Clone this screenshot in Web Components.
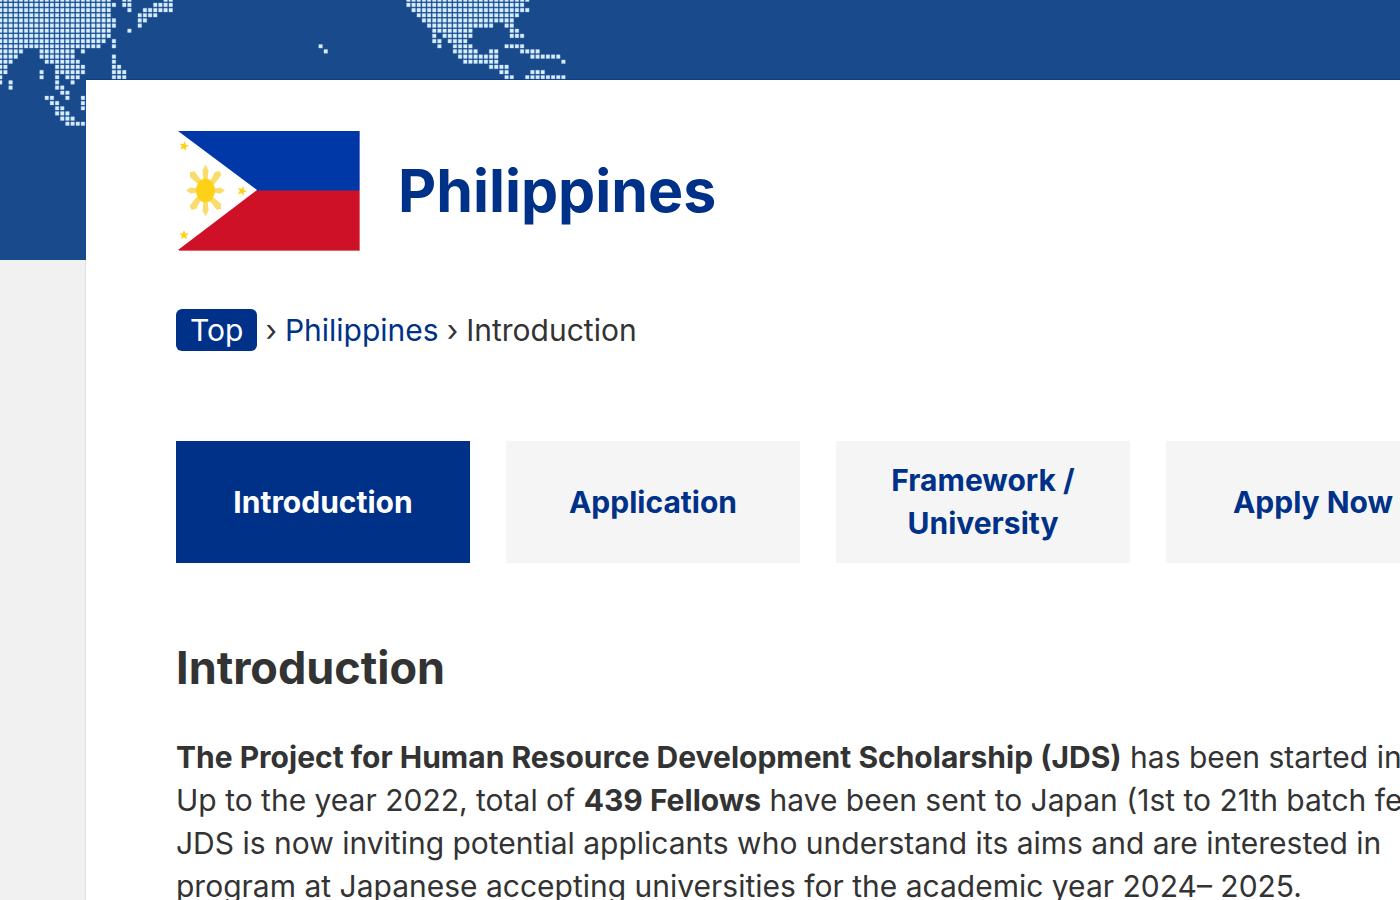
<!DOCTYPE html>
<html lang="en">
<head>
<meta charset="utf-8">
<meta name="viewport" content="width=device-width, initial-scale=1">
<title>Philippines – Introduction</title>
<style>
html{background:#f1f1f1}
body{margin:0;overflow-x:clip;font-family:Inter,"Noto Sans",sans-serif;font-size:30px;line-height:43px;color:#333;
--brand:#003188;--band:#194a8b;--tab:#f5f5f5}
</style>
</head>
<body>
<country-page>
  <dot-map slot="map"></dot-map>
  <country-heading>Philippines</country-heading>
  <bread-crumb></bread-crumb>
  <tab-bar>
    <tab-link href="#introduction" current>Introduction</tab-link>
    <tab-link href="#application">Application</tab-link>
    <tab-link href="#framework">Framework / University</tab-link>
    <tab-link href="#apply">Apply Now</tab-link>
  </tab-bar>
  <text-section heading="Introduction">
    <b>The Project for Human Resource Development Scholarship (JDS)</b> has been started in<br>
    Up to the year 2022, total of <b>439 Fellows</b> have been sent to Japan (1st to 21th batch fe<br>
    JDS is now inviting potential applicants who understand its aims and are interested in<br>
    program at Japanese accepting universities for the academic year 2024– 2025.
  </text-section>
</country-page>
<script>
const define = (name, html, setup) => customElements.define(name, class extends HTMLElement {
  connectedCallback() {
    if (this.shadowRoot) return;
    this.attachShadow({mode: 'open'}).innerHTML = html;
    if (setup) setup(this, this.shadowRoot);
  }
});

define('country-page', `<style>
:host{display:grid;grid-template-columns:86px minmax(0,1fr);grid-template-rows:80px 180px auto;overflow:hidden}
.band{grid-area:1/1/3/3;background:var(--band);overflow:hidden}
main{grid-area:2/2/4/3;background:#fff;padding:50px 0 0 90px;overflow:hidden;box-shadow:0 -1px 1px rgba(0,49,136,.5)}
</style><div class="band"><slot name="map"></slot></div><main><slot></slot></main>`);

// Each row lists the runs of lit dots as first-last column.
const rows = [
  '0-21 24-25 32-33 79-102', '0-22 24-25 30-33 79-101', '0-21 25 28-33 80-102', '0-21 27-30 81-100',
  '0-22 27-28 82-99', '0-22 27 83-95 98-99', '0-21 25 84-91 99-100', '0-21 84 86-91 99-101',
  '0-20 22 84-85 87-90', '0-19 22 62 85 88-91 98-101', '0-4 8-14 16 63 88-92 95-96 101-104',
  '0-3 8-14 22 89-96 103-108', '0-2 9-15 22 90-96 109', '0-1 11-16 22-23 95-98',
  '0-1 8 11-16 22-24 97-98 103-105', '0 8 11 13-15 22-24 98-99 102-109', '0 2 11 14', '2 11-12',
  '12-13', '9-10 13 16', '10-11 16', '11-12 16', '11-13', '12-14', '13-16'];
define('dot-map', `<style>:host{display:block}svg{display:block}</style>
<svg width="620" height="155" viewBox="0 0 120 30" aria-hidden="true"><path fill="#daeefe" stroke="#b4dcff" stroke-opacity=".4" stroke-width=".16"/></svg>`, (el, root) => {
  let d = '';
  rows.forEach((row, y) => row.split(' ').forEach(run => {
    const [a, b = a] = run.split('-').map(Number);
    for (let x = a; x <= b; x++) d += `M${(x - .3).toFixed(2)} ${(y - .4).toFixed(2)}h.7v.7h-.7z`;
  }));
  root.querySelector('path').setAttribute('d', d);
});

const star = (x, y, r) => `<path transform="translate(${x} ${y}) rotate(${r})" d="M0 -5L1.3 -1.6L5 -1.5L2.1 .7L3.1 4.3L0 2.2L-3.1 4.3L-2.1 .7L-5 -1.5L-1.3 -1.6Z"/>`;
define('country-heading', `<style>
:host{display:flex;align-items:center;gap:37px;height:121px}
svg{flex:none;margin-left:1px}
h1{margin:0;font-size:59px;line-height:68px;font-weight:700;color:var(--brand)}
</style>
<svg width="184" height="121" viewBox="0 0 184 121" role="img" aria-label="Flag of the Philippines">
<path fill="#0038a8" d="M1 1H183V60H80Z"/><path fill="#ce1126" d="M1 120L80 60H183V120Z"/>
<path stroke="#6b2465" d="M80 60.500H183"/><path fill="none" stroke="#d96875" d="M182.500 60V120.500H2"/><path stroke="#5b77c2" d="M182.500 1V60"/>
<g fill="#f9dc6b" transform="translate(28.500 60.500)">${[0,90,180,270].map(a => `<path transform="rotate(${a}) scale(1 ${a%180?.75:1})" d="M0 -26L3 -20L2 -10H-2L-3 -20Z"/>`).join('')}
${[38,142,218,322].map(a => `<path transform="rotate(${a})" d="M-1 -24L3 -22L3 -10H-2L-4 -20Z"/>`).join('')}</g>
<ellipse cx="28.500" cy="60.500" rx="9.500" ry="12" fill="#fcd116"/>
<g fill="#fcd116">${star(7,16,12)}${star(65,61,18)}${star(7,105,0)}</g></svg>
<h1><slot></slot></h1>`);

define('bread-crumb', `<style>
:host{display:block;margin-top:57px}
ol{display:flex;align-items:center;gap:8px;list-style:none;margin:0;padding:0;height:43px;white-space:nowrap}
li{display:flex;gap:8px;line-height:42px}
li+li::before{content:"›"}
a{color:var(--brand);text-decoration:none}
.top{background:var(--brand);color:#fff;border-radius:6px;padding:0 14px}
</style><nav aria-label="Breadcrumb"><ol><li><a class="top" href="#top">Top</a></li><li><a href="#philippines">Philippines</a></li><li aria-current="page">Introduction</li></ol></nav>`);

define('tab-bar', `<style>
:host{display:block;margin-top:90px}
nav{display:grid;grid-template-columns:repeat(4,21vw);gap:36px;grid-auto-rows:minmax(122px,auto)}
</style><nav aria-label="Sections"><slot></slot></nav>`);

define('tab-link', `<style>
:host{display:flex}
a{flex:1;display:flex;align-items:center;justify-content:center;text-align:center;padding:0 48px;background:var(--tab);color:var(--brand);font-weight:700;text-decoration:none}
:host([current]) a{background:var(--brand);color:#fff}
</style><a><slot></slot></a>`, (el, root) => {
  const a = root.querySelector('a');
  a.href = el.getAttribute('href');
  if (el.hasAttribute('current')) a.setAttribute('aria-current', 'page');
});

define('text-section', `<style>
:host{display:block;margin-top:72px}
h2{margin:0;font-size:45px;line-height:66px;font-weight:700}
p{margin:35px 0 0;white-space:nowrap}
</style><h2></h2><p><slot></slot></p>`, (el, root) => {
  root.querySelector('h2').textContent = el.getAttribute('heading');
});
</script>
</body>
</html>
